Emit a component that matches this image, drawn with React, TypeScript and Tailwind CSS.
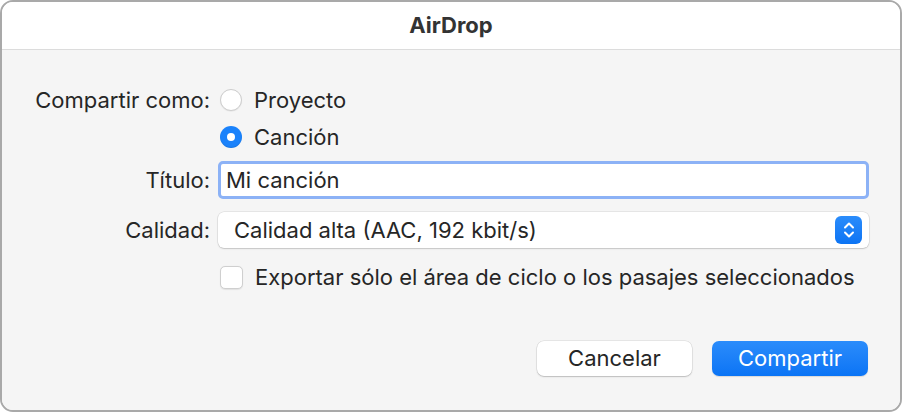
import React from "react";

const font = { fontFamily: "Inter, 'Liberation Sans', sans-serif" };

function Radio({ checked }: { checked?: boolean }) {
  if (checked) {
    return (
      <span className="flex h-[22px] w-[22px] items-center justify-center rounded-full bg-[#1a82fb] shadow-[inset_0_-1px_1px_rgba(0,0,0,0.1)]">
        <span className="h-[8px] w-[8px] rounded-full bg-white" />
      </span>
    );
  }
  return (
    <span className="block h-[22px] w-[22px] rounded-full border border-[#cdcdcd] bg-white shadow-[0_0.5px_1px_rgba(0,0,0,0.08)]" />
  );
}

function Stepper() {
  return (
    <span className="flex h-[28px] w-[27px] items-center justify-center rounded-[6px] bg-gradient-to-b from-[#2a8cfb] to-[#0b74f4]">
      <svg width="14" height="20" viewBox="0 0 14 20" fill="none">
        <path d="M3 7.5 L7 3.5 L11 7.5" stroke="white" strokeWidth="2" strokeLinecap="round" strokeLinejoin="round" />
        <path d="M3 12.5 L7 16.5 L11 12.5" stroke="white" strokeWidth="2" strokeLinecap="round" strokeLinejoin="round" />
      </svg>
    </span>
  );
}

export default function App() {
  return (
    <div className="h-[412px] w-[902px] bg-white" style={font}>
      <div className="flex h-[412px] w-[902px] flex-col overflow-hidden rounded-[13px] border-2 border-[#a9a9a9] text-[22px] text-[#262626]">
        <div className="flex h-[48px] shrink-0 items-center justify-center border-b border-[#dcdcdc] bg-white">
          <span className="font-bold text-[#333]">AirDrop</span>
        </div>
        <div className="flex flex-1 flex-col bg-[#f5f5f5] pr-[31px]">
          <div className="mt-[35px] flex h-[30px] items-center">
            <span className="w-[208px] text-right leading-none">Compartir como:</span>
            <span className="ml-[10px]"><Radio /></span>
            <span className="ml-[12px]">Proyecto</span>
          </div>
          <div className="mt-[7px] flex h-[30px] items-center">
            <span className="w-[208px]" />
            <span className="ml-[10px]"><Radio checked /></span>
            <span className="ml-[12px]">Canción</span>
          </div>
          <div className="mt-[9px] flex h-[38px] items-center">
            <span className="w-[208px] text-right">Título:</span>
            <div className="ml-[8px] flex h-[38px] flex-1 items-center rounded-[5px] border-[3.5px] border-[#8cb2f6] bg-white pl-[5px]">
              Mi canción
            </div>
          </div>
          <div className="mt-[13px] flex h-[36px] items-center">
            <span className="w-[208px] text-right">Calidad:</span>
            <div className="ml-[8px] flex h-[36px] flex-1 items-center justify-between rounded-[6px] bg-white pl-[16px] pr-[7px] shadow-[0_0_0_0.5px_rgba(0,0,0,0.12),0_1px_1.5px_rgba(0,0,0,0.15)]">
              <span>Calidad alta (AAC, 192 kbit/s)</span>
              <Stepper />
            </div>
          </div>
          <div className="mt-[14px] flex h-[30px] items-center">
            <span className="w-[208px]" />
            <span className="ml-[10px] block h-[23px] w-[23px] rounded-[5px] border border-[#cfcfcf] bg-white shadow-[0_0.5px_1px_rgba(0,0,0,0.08)]" />
            <span className="ml-[12px]">Exportar sólo el área de ciclo o los pasajes seleccionados</span>
          </div>
          <div className="mt-[49px] flex justify-end gap-[20px] pr-[1px]">
            <button className="h-[35px] w-[155px] rounded-[7px] bg-white text-[#262626] shadow-[0_0_0_0.5px_rgba(0,0,0,0.12),0_1px_1.5px_rgba(0,0,0,0.18)]">
              Cancelar
            </button>
            <button className="h-[35px] w-[156px] rounded-[7px] bg-gradient-to-b from-[#2a8cfb] to-[#0a74f5] text-white shadow-[0_1px_1px_rgba(0,0,0,0.12)]">
              Compartir
            </button>
          </div>
        </div>
      </div>
    </div>
  );
}
